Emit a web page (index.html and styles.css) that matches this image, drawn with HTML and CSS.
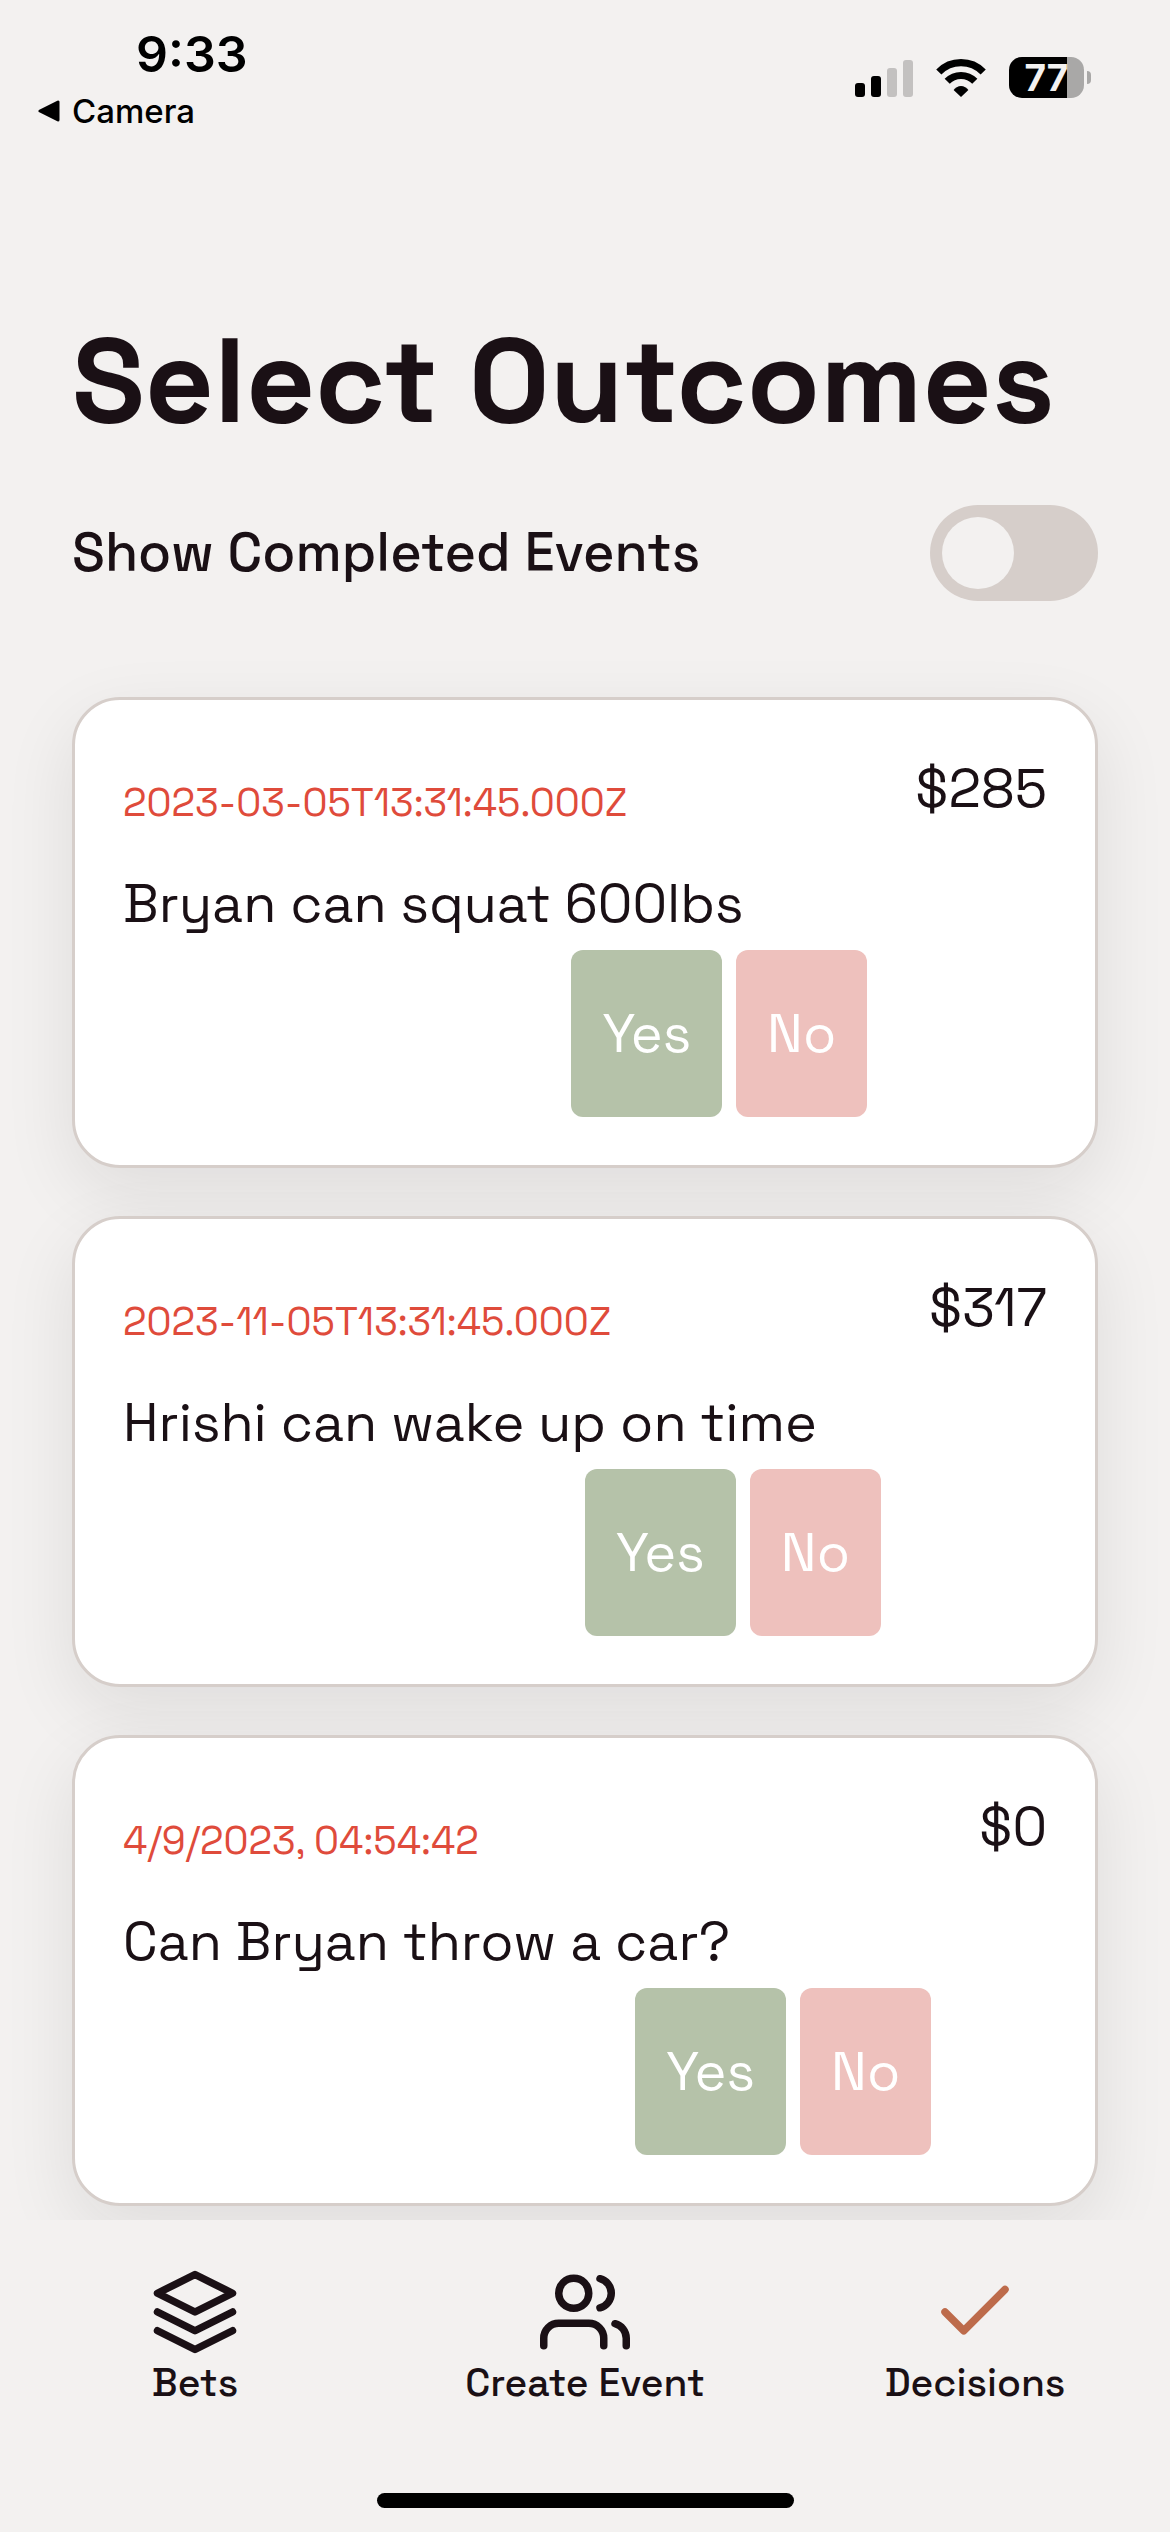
FILE: index.html
```html
<!DOCTYPE html>
<html lang="en">
<head>
  <meta charset="utf-8">
  <meta name="viewport" content="width=device-width, initial-scale=1">
  <title>Select Outcomes</title>
  <link rel="stylesheet" href="styles.css">
</head>
<body>
  <div class="app">
    <header class="status">
      <div class="status-left">
        <time class="clock">9:33</time>
        <a class="back" href="#camera">
          <svg class="back-arrow" viewBox="0 0 22 22" aria-hidden="true"><path d="M20 2v18L2 11z" fill="currentColor" stroke="currentColor" stroke-width="3" stroke-linejoin="round"/></svg>
          Camera
        </a>
      </div>
      <div class="status-right">
        <svg class="signal" viewBox="0 0 58 38" aria-label="Signal">
          <rect x="0" y="24" width="10" height="14" rx="3"/>
          <rect x="16" y="17" width="10" height="21" rx="3"/>
          <rect x="32" y="9" width="10" height="29" rx="3" fill="#c3c1c0"/>
          <rect x="48" y="1" width="10" height="37" rx="3" fill="#c3c1c0"/>
        </svg>
        <svg class="wifi" viewBox="0 0 52 38" aria-label="Wi-Fi">
          <g fill="none" stroke="#000" stroke-width="7.2">
            <path d="M3.8 13a31 31 0 0 1 44.400 0"/>
            <path d="M12.200 22.300a19.300 19.300 0 0 1 27.600 0"/>
          </g>
          <path d="M18.600 31a9 9 0 0 1 14.800 0L26 38z"/>
        </svg>
        <div class="battery"><span class="battery-level">77</span></div>
      </div>
    </header>

    <main class="content">
      <h1 class="title">Select Outcomes</h1>
      <div class="filter">
        <label class="filter-label" for="completed">Show Completed Events</label>
        <input class="switch" type="checkbox" role="switch" id="completed">
      </div>

      <div class="cards">
        <article class="card">
          <div class="card-body">
            <time class="date">2023-03-05T13:31:45.000Z</time>
            <h2 class="question">Bryan can squat 600lbs</h2>
            <div class="actions">
              <button class="answer yes" type="button">Yes</button>
              <button class="answer no" type="button">No</button>
            </div>
          </div>
          <p class="amount">$285</p>
        </article>
        <article class="card">
          <div class="card-body">
            <time class="date">2023-11-05T13:31:45.000Z</time>
            <h2 class="question">Hrishi can wake up on time</h2>
            <div class="actions">
              <button class="answer yes" type="button">Yes</button>
              <button class="answer no" type="button">No</button>
            </div>
          </div>
          <p class="amount">$317</p>
        </article>
        <article class="card">
          <div class="card-body">
            <time class="date">4/9/2023, 04:54:42</time>
            <h2 class="question">Can Bryan throw a car?</h2>
            <div class="actions">
              <button class="answer yes" type="button">Yes</button>
              <button class="answer no" type="button">No</button>
            </div>
          </div>
          <p class="amount">$0</p>
        </article>
      </div>
    </main>

    <footer class="footer">
      <nav class="tabs">
        <a class="tab" href="#bets">
          <svg class="icon" viewBox="0 0 24 24" aria-hidden="true"><path d="M12 2 2 7l10 5 10-5zM2 17l10 5 10-5M2 12l10 5 10-5"/></svg>
          Bets
        </a>
        <a class="tab" href="#create">
          <svg class="icon" viewBox="0 0 24 24" aria-hidden="true"><path d="M17 21v-2a4 4 0 0 0-4-4H5a4 4 0 0 0-4 4v2M23 21v-2a4 4 0 0 0-3-3.870M16 3.130a4 4 0 0 1 0 7.750"/><circle cx="9" cy="7" r="4"/></svg>
          Create Event
        </a>
        <a class="tab" href="#decisions" aria-current="page">
          <svg class="icon icon-active" viewBox="0 0 24 24" aria-hidden="true"><path d="M20 6 9 17l-5-5"/></svg>
          Decisions
        </a>
      </nav>
      <div class="home-bar"></div>
    </footer>
  </div>
</body>
</html>
```
FILE: styles.css
```css
:root {
  --bg: #f3f1f0;
  --ink: #1a1015;
  --line: #d6ceca;
}

* { box-sizing: border-box; }

body {
  margin: 0;
  background: var(--bg);
  color: var(--ink);
  font-family: "Space Grotesk", Inter, "Liberation Sans", sans-serif;
}

h1, h2, p { margin: 0; font-weight: 400; }
a { color: inherit; text-decoration: none; }

.app {
  min-height: 100vh;
  display: flex;
  flex-direction: column;
}

.status {
  display: flex;
  justify-content: space-between;
  align-items: flex-start;
  padding: 24px 78px 0 38px;
  color: #000;
  font-family: Inter, "Liberation Sans", sans-serif;
}

.status-left { display: flex; flex-direction: column; }

.clock {
  padding-left: 98px;
  font-size: 50px;
  font-weight: 600;
  line-height: 60px;
}

.back {
  display: flex;
  align-items: center;
  gap: 12px;
  font-size: 33px;
  font-weight: 500;
  line-height: 54px;
}

.back-arrow { width: 22px; height: 22px; }

.status-right {
  display: flex;
  align-items: center;
  gap: 22px;
  padding-top: 33px;
}

.signal { width: 58px; height: 38px; }
.wifi { width: 52px; height: 38px; }

.battery {
  position: relative;
  width: 75px;
  height: 41px;
  margin-right: 8px;
  border-radius: 13px;
  background: linear-gradient(90deg, #000 58px, #a9a8a7 58px);
  text-align: center;
}

/* battery terminal */
.battery::after {
  content: "";
  position: absolute;
  top: 14px;
  right: -7px;
  width: 4px;
  height: 13px;
  border-radius: 0 8px 8px 0;
  background: #a9a8a7;
}

.battery-level {
  color: var(--bg);
  font-size: 37px;
  font-weight: 700;
  line-height: 41px;
}

.content {
  flex: 1;
  padding: 180px 72px 14px;
}

.title {
  font-size: 120px;
  font-weight: 700;
  line-height: 126px;
}

.filter {
  display: flex;
  justify-content: space-between;
  align-items: center;
  margin-top: 61px;
}

.filter-label {
  font-size: 54px;
  font-weight: 500;
  line-height: 66px;
}

.switch {
  appearance: none;
  width: 168px;
  height: 96px;
  margin: 0;
  padding: 12px;
  border-radius: 48px;
  background: var(--line);
}

.switch::before {
  content: "";
  display: block;
  width: 72px;
  height: 72px;
  border-radius: 50%;
  background: var(--bg);
}

.switch:checked::before { margin-left: auto; }

.cards {
  display: flex;
  flex-direction: column;
  gap: 48px;
  margin-top: 96px;
}

.card {
  display: flex;
  align-items: flex-start;
  gap: 48px;
  padding: 48px;
  border: 3px solid var(--line);
  border-radius: 48px;
  background: #fff;
  box-shadow: 0 24px 72px rgba(26, 20, 24, 0.09);
}

.card-body {
  flex: 1;
  display: flex;
  flex-direction: column;
  padding-top: 25px;
}

.date {
  color: #df4b3b;
  font-size: 39px;
  line-height: 60px;
}

.question {
  margin-top: 38px;
  font-size: 54px;
  line-height: 66px;
  white-space: nowrap;
}

.actions {
  display: flex;
  justify-content: flex-end;
  gap: 14px;
  margin-top: 13px;
}

.answer {
  height: 167px;
  padding: 0 31px;
  border: 0;
  border-radius: 12px;
  color: #fff;
  font: inherit;
  font-size: 54px;
}

.yes { background: #b5c2a9; }
.no { background: #eec1bd; }

.amount {
  padding-top: 8px;
  font-size: 54px;
  line-height: 66px;
}

.footer {
  position: sticky;
  bottom: 0;
  padding: 47px 0 24px;
  background: var(--bg);
}

.tabs {
  display: grid;
  grid-template-columns: repeat(3, 1fr);
}

.tab {
  display: flex;
  flex-direction: column;
  align-items: center;
  font-size: 39px;
  font-weight: 500;
  line-height: 52px;
}

.icon {
  width: 90px;
  height: 90px;
  fill: none;
  stroke: currentColor;
  stroke-width: 2;
  stroke-linecap: round;
  stroke-linejoin: round;
}

.icon-active { color: #bd6b4b; }

.home-bar {
  width: 417px;
  height: 15px;
  margin: 84px auto 0;
  border-radius: 8px;
  background: #000;
}
```
